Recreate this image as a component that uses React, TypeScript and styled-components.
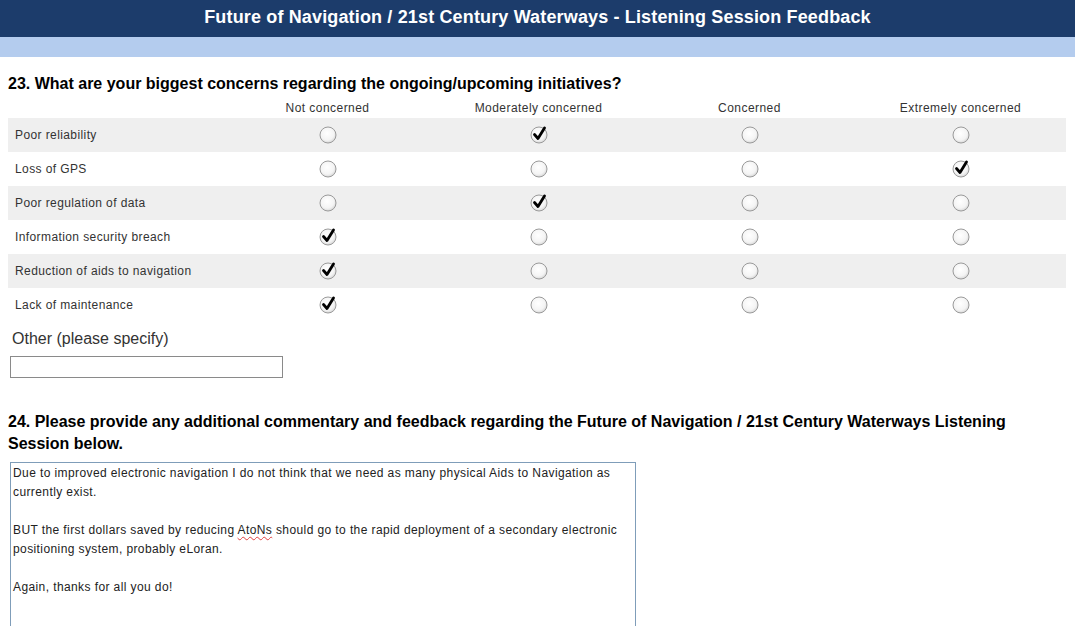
import React from "react";
import styled, { createGlobalStyle } from "styled-components";

const Global = createGlobalStyle`
  html, body { margin: 0; padding: 0; background: #fff; }
  body { font-family: "Liberation Sans", Arial, sans-serif; overflow: hidden; }
`;

const Page = styled.div`
  width: 1075px;
  height: 626px;
  overflow: hidden;
  display: flex;
  flex-direction: column;
  & > * { flex-shrink: 0; }
`;

const TitleBar = styled.div`
  height: 37px;
  padding-bottom: 2px;
  box-sizing: border-box;
  background: #1c3c6b;
  color: #fff;
  font-weight: bold;
  font-size: 18px;
  letter-spacing: 0.15px;
  display: flex;
  align-items: center;
  justify-content: center;
`;

const SubBar = styled.div`
  height: 20px;
  background: #b4ccee;
`;

const Content = styled.div`
  padding: 16px 10px 0 8px;
  display: flex;
  flex-direction: column;
`;

const Question = styled.div`
  font-size: 16px;
  font-weight: bold;
  color: #000;
  line-height: 22px;
`;

const Grid = styled.div`
  display: grid;
  grid-template-columns: 214px repeat(4, 211px);
  width: 1058px;
  margin-top: 2px;
`;

const HeadCell = styled.div`
  font-size: 12px;
  letter-spacing: 0.45px;
  color: #333;
  text-align: center;
  height: 21px;
  line-height: 22px;
`;

const Row = styled.div<{ $shaded: boolean }>`
  display: contents;
  & > div { background: ${(p) => (p.$shaded ? "#efefef" : "#fff")}; }
`;

const LabelCell = styled.div`
  height: 34px;
  display: flex;
  align-items: center;
  padding-left: 7px;
  font-size: 12px;
  letter-spacing: 0.4px;
  color: #333;
`;

const RadioCell = styled.div`
  height: 34px;
  display: flex;
  align-items: center;
  justify-content: center;
`;

const OtherLabel = styled.div`
  margin-top: 7px;
  padding-left: 4px;
  font-size: 16px;
  color: #333;
  line-height: 20px;
`;

const OtherInput = styled.div`
  margin: 7px 0 0 2px;
  width: 271px;
  height: 20px;
  border: 1px solid #8a8a8a;
`;

const Question24 = styled(Question)`
  margin-top: 33px;
  width: 1057px;
`;

const TextArea = styled.div`
  margin: 7px 0 0 2px;
  width: 620px;
  height: 200px;
  border: 1px solid #7f9db9;
  padding: 1px 2px 0 2px;
  font-size: 12px;
  letter-spacing: 0.4px;
  line-height: 19px;
  color: #222;
`;

const Para = styled.p`
  margin: 0 0 19px 0;
`;

const Spell = styled.span`
  text-decoration: underline wavy #e04040;
  text-decoration-thickness: 1px;
  text-underline-offset: 2px;
`;

function Radio({ checked }: { checked: boolean }) {
  return (
    <svg width="20" height="20" viewBox="0 0 20 20">
      <defs>
        <radialGradient id="rg" cx="45%" cy="40%" r="60%">
          <stop offset="0%" stopColor="#ffffff" />
          <stop offset="70%" stopColor="#f4f4f4" />
          <stop offset="100%" stopColor="#d8d8d8" />
        </radialGradient>
      </defs>
      <circle cx="10" cy="10" r="8" fill="url(#rg)" stroke="#9a9a9a" strokeWidth="1" />
      {checked && (
        <path
          d="M5.5 9.5 L9 13.5 L15.5 3"
          fill="none"
          stroke="#000"
          strokeWidth="2.8"
          strokeLinecap="round"
          strokeLinejoin="round"
        />
      )}
    </svg>
  );
}

const cols = ["Not concerned", "Moderately concerned", "Concerned", "Extremely concerned"];
const rows: [string, number][] = [
  ["Poor reliability", 1],
  ["Loss of GPS", 3],
  ["Poor regulation of data", 1],
  ["Information security breach", 0],
  ["Reduction of aids to navigation", 0],
  ["Lack of maintenance", 0],
];

export default function App() {
  return (
    <Page>
      <Global />
      <TitleBar>Future of Navigation / 21st Century Waterways - Listening Session Feedback</TitleBar>
      <SubBar />
      <Content>
        <Question>23. What are your biggest concerns regarding the ongoing/upcoming initiatives?</Question>
        <Grid>
          <HeadCell />
          {cols.map((c) => (
            <HeadCell key={c}>{c}</HeadCell>
          ))}
          {rows.map(([label, sel], i) => (
            <Row key={label} $shaded={i % 2 === 0}>
              <LabelCell>{label}</LabelCell>
              {cols.map((c, j) => (
                <RadioCell key={c}>
                  <Radio checked={j === sel} />
                </RadioCell>
              ))}
            </Row>
          ))}
        </Grid>
        <OtherLabel>Other (please specify)</OtherLabel>
        <OtherInput />
        <Question24>
          24. Please provide any additional commentary and feedback regarding the Future of Navigation / 21st Century Waterways Listening Session below.
        </Question24>
        <TextArea>
          <Para>
            Due to improved electronic navigation I do not think that we need as many physical Aids to Navigation as currently exist.
          </Para>
          <Para>
            BUT the first dollars saved by reducing <Spell>AtoNs</Spell> should go to the rapid deployment of a secondary electronic positioning system, probably eLoran.
          </Para>
          <Para>Again, thanks for all you do!</Para>
        </TextArea>
      </Content>
    </Page>
  );
}
